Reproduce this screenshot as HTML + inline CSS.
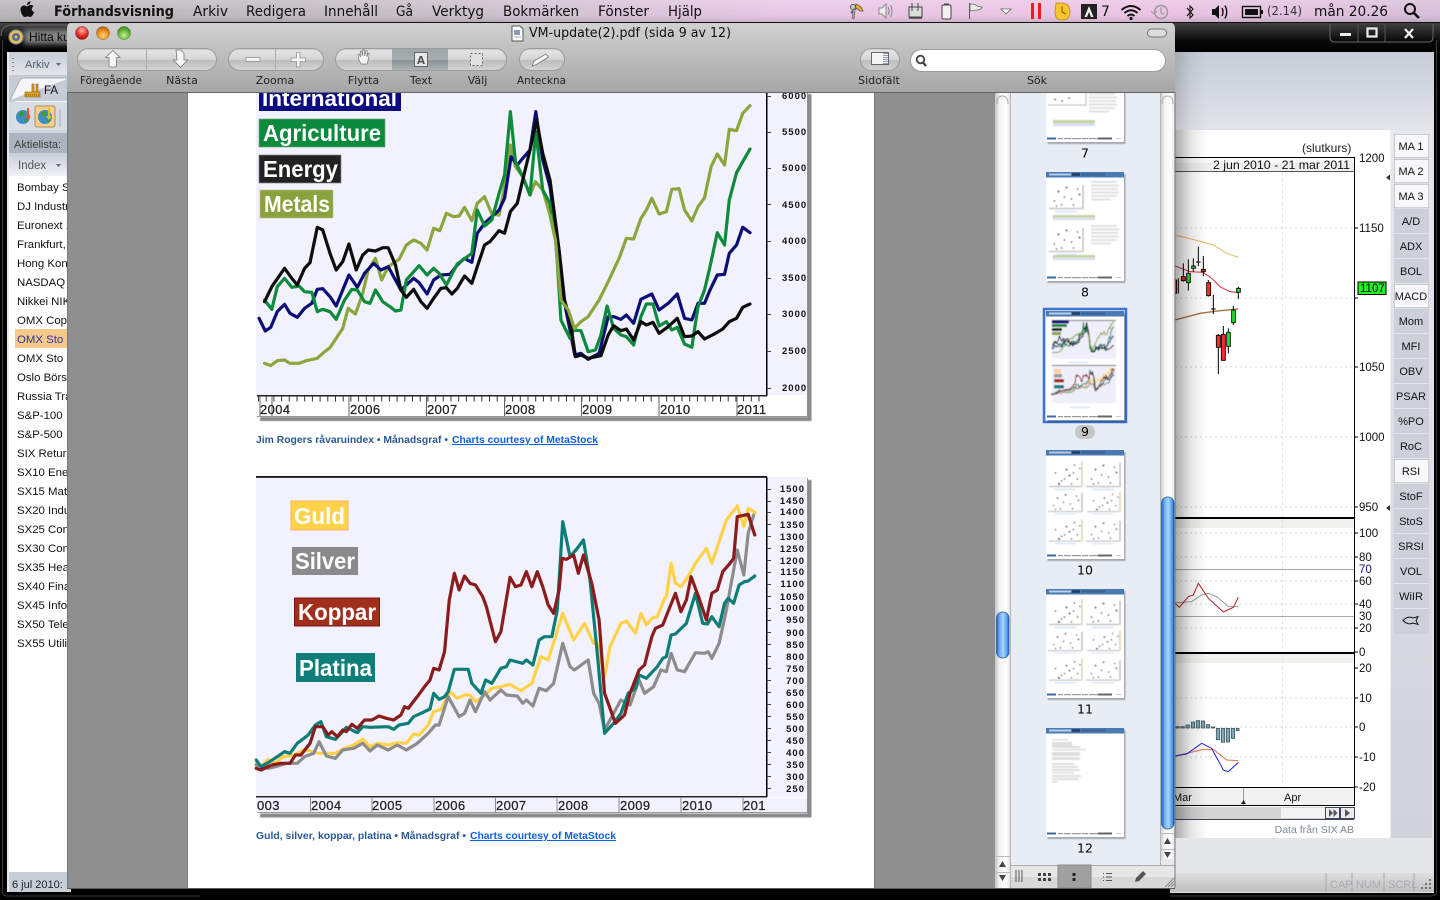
<!DOCTYPE html>
<html><head><meta charset="utf-8"><title>VM-update(2).pdf</title>
<style>
html,body{margin:0;padding:0;width:1440px;height:900px;overflow:hidden;background:#000}
svg{display:block;position:absolute;left:0;top:0}
text{font-family:"DejaVu Sans",sans-serif}
.ln{fill:none;vector-effect:non-scaling-stroke;stroke-linejoin:round;stroke-linecap:round}
.ax text{font-family:"Liberation Sans",sans-serif;font-weight:bold;font-size:9.5px;letter-spacing:1px;fill:#111}
.yr text{font-family:"Liberation Sans",sans-serif;font-size:13px;fill:#222;letter-spacing:.4px;stroke:#222;stroke-width:.25}
.m text{font-size:14px;fill:#111}
.tb text{font-size:11px;fill:#222;text-anchor:middle}
.li text{font-family:"Liberation Sans",sans-serif;font-size:11.4px;fill:#111}
.bt text{font-family:"Liberation Sans",sans-serif;font-size:11px;fill:#111;text-anchor:middle}
.sc text{font-family:"Liberation Sans",sans-serif;font-size:11.5px;fill:#111}
</style></head><body>
<svg width="1440" height="900" viewBox="0 0 1440 900" xmlns="http://www.w3.org/2000/svg">
<defs>
<linearGradient id="menu" x1="0" x2="1" y1="0" y2="0"><stop offset="0" stop-color="#b9b7b9"/><stop offset=".3" stop-color="#c8c0c8"/><stop offset=".55" stop-color="#e8c8e6"/><stop offset=".8" stop-color="#ecc4e4"/><stop offset="1" stop-color="#d7c0da"/></linearGradient>
<linearGradient id="menuv" x1="0" x2="0" y1="0" y2="1"><stop offset="0" stop-color="#fff" stop-opacity=".18"/><stop offset=".5" stop-color="#fff" stop-opacity="0"/><stop offset="1" stop-color="#000" stop-opacity=".12"/></linearGradient>
<linearGradient id="tbar" x1="0" x2="0" y1="0" y2="1"><stop offset="0" stop-color="#d2d2d2"/><stop offset="1" stop-color="#a6a6a6"/></linearGradient>
<linearGradient id="pill" x1="0" x2="0" y1="0" y2="1"><stop offset="0" stop-color="#bdbdbd"/><stop offset=".1" stop-color="#e4e4e4"/><stop offset=".5" stop-color="#d4d4d4"/><stop offset=".55" stop-color="#bdbdbd"/><stop offset="1" stop-color="#d5d5d5"/></linearGradient>
<linearGradient id="pillsel" x1="0" x2="0" y1="0" y2="1"><stop offset="0" stop-color="#9fa4a6"/><stop offset=".5" stop-color="#a9aeb0"/><stop offset=".55" stop-color="#889195"/><stop offset="1" stop-color="#aeb3b5"/></linearGradient>
<linearGradient id="vtrack" x1="0" x2="1" y1="0" y2="0"><stop offset="0" stop-color="#c6c6c6"/><stop offset=".3" stop-color="#f2f2f2"/><stop offset=".75" stop-color="#fff"/><stop offset="1" stop-color="#dcdcdc"/></linearGradient>
<linearGradient id="vthumb" x1="0" x2="1" y1="0" y2="0"><stop offset="0" stop-color="#1f5fc0"/><stop offset=".25" stop-color="#6fb0ee"/><stop offset=".55" stop-color="#a9d6fb"/><stop offset=".85" stop-color="#4b9cec"/><stop offset="1" stop-color="#1f5fc0"/></linearGradient>
<linearGradient id="shade" x1="0" x2="1" y1="0" y2="0"><stop offset="0" stop-color="#000" stop-opacity=".34"/><stop offset=".5" stop-color="#000" stop-opacity=".1"/><stop offset="1" stop-color="#000" stop-opacity="0"/></linearGradient>
<linearGradient id="panel" x1="0" x2="0" y1="0" y2="1"><stop offset="0" stop-color="#c7ccd6"/><stop offset="1" stop-color="#e3e5ea"/></linearGradient>
<linearGradient id="right" x1="0" x2="0" y1="0" y2="1"><stop offset="0" stop-color="#e6e8ec"/><stop offset="1" stop-color="#d0d3da"/></linearGradient>
<linearGradient id="idx" x1="0" x2="0" y1="0" y2="1"><stop offset="0" stop-color="#c9cdd7"/><stop offset="1" stop-color="#f0f1f4"/></linearGradient>
<linearGradient id="blk" x1="0" x2="0" y1="0" y2="1"><stop offset="0" stop-color="#444"/><stop offset=".6" stop-color="#0c0c0c"/><stop offset="1" stop-color="#000"/></linearGradient>
<linearGradient id="lgray" x1="0" x2="0" y1="0" y2="1"><stop offset="0" stop-color="#dfdfdf"/><stop offset="1" stop-color="#bfbfbf"/></linearGradient>
<radialGradient id="rd" cx=".5" cy=".3" r=".7"><stop offset="0" stop-color="#ffb0a8"/><stop offset=".6" stop-color="#e83028"/><stop offset="1" stop-color="#a01010"/></radialGradient>
<radialGradient id="yl" cx=".5" cy=".7" r=".7"><stop offset="0" stop-color="#ffd870"/><stop offset=".6" stop-color="#e88a20"/><stop offset="1" stop-color="#b06010"/></radialGradient>
<radialGradient id="gn" cx=".5" cy=".7" r=".7"><stop offset="0" stop-color="#c0f090"/><stop offset=".6" stop-color="#64b83c"/><stop offset="1" stop-color="#3c8020"/></radialGradient>
<filter id="soft" x="-5%" y="-5%" width="110%" height="110%"><feGaussianBlur stdDeviation=".35"/></filter>
<filter id="soft2" x="-5%" y="-5%" width="110%" height="110%"><feGaussianBlur stdDeviation=".5"/></filter>
<filter id="soft3" x="-20%" y="-50%" width="140%" height="200%"><feGaussianBlur stdDeviation="3"/></filter>
<clipPath id="cc"><rect x="67" y="92" width="1108" height="796"/></clipPath>

<g id="c1m">
<polyline class="ln" stroke="#8aa63c" points="40,820 57,827 75,812 95,810 110,820 135,820 155,812 185,805 205,785 220,773 240,740 255,715 270,655 290,672 310,610 325,540 345,505 362,570 380,530 410,508 430,465 450,450 470,460 487,480 505,415 522,422 540,370 560,380 575,378 590,352 610,392 625,340 645,320 665,372 685,375 700,290 716,165 730,230 750,260 770,315 785,275 805,300 825,375 840,450 855,630 875,660 892,715 910,695 930,680 960,630 985,575 1015,505 1035,445 1055,447 1075,385 1090,360 1105,325 1125,372 1145,365 1160,298 1180,296 1195,360 1215,393 1232,350 1250,323 1268,230 1285,192 1305,225 1318,118 1338,122 1355,70 1375,47"/>
<polyline class="ln" stroke="#101078" points="25,685 42,723 57,712 75,665 95,643 110,670 130,682 150,655 170,640 185,598 200,596 220,620 237,648 255,600 272,555 295,592 315,550 340,520 360,540 380,530 400,570 415,600 430,585 450,565 465,578 487,612 505,570 525,555 550,553 570,525 590,505 610,517 625,430 645,400 665,380 685,360 700,325 718,200 735,225 750,205 770,180 786,65 805,210 825,290 850,500 865,640 880,720 893,795 910,790 930,808 960,790 985,680 1000,680 1020,688 1035,675 1055,700 1075,628 1105,612 1125,660 1150,640 1175,612 1195,685 1215,690 1232,640 1250,640 1265,600 1285,555 1305,553 1318,490 1338,465 1355,412 1375,428"/>
<polyline class="ln" stroke="#0c8a3a" points="40,630 60,658 75,590 95,565 115,592 135,588 150,605 170,607 185,665 200,658 220,665 237,688 260,630 280,598 295,600 315,635 330,640 345,600 365,635 385,650 400,663 415,660 430,570 465,527 487,555 505,535 520,550 540,585 570,522 610,490 625,360 645,408 665,390 685,310 700,255 716,65 730,215 750,260 770,315 786,125 805,300 825,340 840,430 855,690 880,745 890,720 910,722 930,785 950,780 965,735 982,648 1000,715 1020,735 1035,740 1055,765 1075,680 1090,642 1108,642 1125,708 1145,695 1160,720 1175,712 1195,762 1215,772 1232,650 1250,600 1265,530 1285,428 1305,465 1318,330 1338,248 1355,215 1375,177"/>
<polyline class="ln" stroke="#0a0a0a" points="40,635 60,590 95,535 115,565 130,585 150,535 165,518 185,412 200,420 220,490 237,540 255,515 272,462 292,540 310,495 325,480 345,483 365,473 380,473 400,525 415,600 430,622 450,598 470,635 487,655 505,625 525,595 540,593 555,612 570,595 590,558 610,580 625,530 645,465 660,455 685,422 700,430 716,365 735,340 750,270 770,180 788,90 805,190 825,270 850,480 865,630 880,690 895,800 910,795 930,805 965,797 985,735 1000,707 1020,722 1035,717 1055,750 1075,695 1090,705 1108,697 1125,730 1150,710 1175,685 1195,740 1215,738 1232,725 1250,747 1275,733 1300,717 1318,695 1338,685 1355,652 1375,642"/>
<polyline class="ln" stroke="#8aa63c" points="825,375 840,450 855,630 875,660 892,715"/>
</g>
<g id="c2m">
<polyline class="ln" stroke="#ffd24a" points="17,880 30,890 50,868 70,880 90,860 110,858 130,850 150,838 170,845 190,850 210,850 235,850 260,835 285,825 310,808 330,830 350,820 380,825 405,818 430,820 450,792 465,795 490,765 505,725 525,718 550,665 570,685 590,675 605,675 620,695 640,680 665,655 690,650 715,643 745,662 775,640 800,560 820,570 860,430 890,510 920,460 945,520 955,520 975,620 990,530 1020,460 1035,453 1060,490 1075,430 1090,465 1105,445 1120,440 1140,385 1145,380 1158,280 1170,340 1185,350 1205,320 1225,280 1255,235 1270,280 1310,150 1340,108 1358,170 1370,115 1390,128"/>
<polyline class="ln" stroke="#8c8c8c" points="17,885 50,895 70,890 100,880 130,880 150,860 175,850 190,815 210,858 235,865 255,840 285,835 310,820 330,843 350,825 380,840 405,825 430,840 460,820 490,790 510,765 520,765 545,680 575,740 590,730 605,690 620,725 645,665 660,690 690,660 705,675 735,678 750,700 760,690 778,708 795,655 815,662 835,640 860,520 880,590 892,600 930,570 945,670 960,700 975,780 1020,690 1045,705 1070,630 1085,670 1110,650 1130,600 1145,605 1158,550 1175,600 1195,605 1225,548 1250,550 1260,545 1270,565 1290,520 1310,420 1340,240 1358,315 1370,190 1385,135"/>
<polyline class="ln" stroke="#0f7d78" points="17,870 30,890 50,878 75,860 95,845 110,850 130,820 160,795 180,765 195,755 210,800 235,808 255,785 265,772 295,788 310,770 330,772 380,770 395,778 410,765 435,760 450,740 470,730 495,717 505,670 520,688 535,680 545,665 562,598 600,598 610,640 635,670 648,630 665,640 690,595 705,590 715,570 750,580 760,570 778,585 795,510 810,500 830,500 845,420 860,155 880,260 900,235 917,210 935,330 955,550 975,790 1000,760 1020,730 1040,670 1060,655 1070,615 1090,625 1120,590 1135,565 1145,560 1158,495 1170,492 1200,460 1225,370 1245,460 1258,462 1270,440 1290,470 1305,400 1315,385 1330,400 1345,345 1360,335 1370,333 1388,318"/>
<polyline class="ln" stroke="#8b1a1e" points="17,895 30,900 60,885 85,880 110,880 125,855 140,855 165,820 180,770 200,770 215,795 225,785 240,800 255,780 265,785 280,763 295,775 315,750 335,750 355,738 375,745 395,750 415,735 425,710 435,715 460,680 480,650 495,630 505,595 520,600 535,545 548,390 562,310 575,360 590,318 605,340 620,345 640,380 650,410 675,515 690,485 715,322 730,350 745,345 760,305 775,350 790,305 805,350 820,405 835,430 850,360 858,265 870,268 890,255 903,310 917,255 940,340 960,450 975,670 1005,760 1030,735 1045,670 1070,600 1085,585 1105,500 1115,475 1135,465 1155,410 1170,370 1185,425 1200,390 1213,320 1235,385 1255,450 1270,370 1285,360 1300,305 1320,280 1330,265 1340,140 1370,133 1388,195"/>
</g>

<g id="thb">
<rect x="1.500" y="2" width="78" height="109" fill="#000" opacity=".28" filter="url(#soft2)"/>
<rect width="78" height="109" fill="#fff"/>
<rect width="78" height="5.500" fill="#4a7ab4"/>
<rect x="3" y="1.500" width="22" height="2" fill="#d5e2f0" opacity=".8"/>
<rect x="26" y="1.200" width="8" height="2.600" fill="#1a2f55" opacity=".8"/>
<rect x="35" y="1.500" width="24" height="2" fill="#3a5a88" opacity=".8"/>
<rect x="1" y="104.500" width="9" height="2" fill="#3a6aa5"/>
<g fill="#999"><rect x="12" y="105" width="5" height="1.200"/><rect x="18" y="105" width="7" height="1.200"/><rect x="26" y="105" width="9" height="1.200"/><rect x="36" y="105" width="6" height="1.200"/><rect x="43" y="105" width="9" height="1.200"/></g>
<rect x="52" y="104.500" width="14" height="2" fill="#666"/>
<rect x="70" y="105" width="5" height="1" fill="#ccc"/>
</g>
<g id="tl" fill="#e1e1e1"><rect width="26" height="2"/><rect y="3.500" width="28" height="2"/><rect y="7" width="27" height="2"/><rect y="10.500" width="28" height="2"/><rect y="14" width="26" height="2"/><rect y="17.500" width="20" height="2"/></g>
<g id="mini">
<path d="M2 29.500h32" stroke="#bcbcbc" stroke-width="1.200" fill="none"/><path d="M35 4v26" stroke="#d8c898" stroke-width="1.200" fill="none"/>
<path d="M7 32.500h22" stroke="#d4e3f9" stroke-width="1.400" fill="none"/>
<path d="M8 16l1 0M14 24l1 0M19 12l1 1M22 18l1 1M27 8l1 0M30 22l1 0M33 11l0 1M11 27l2 0M24 27l1 0M17 22l1 0M26 16l1 0" stroke="#1a1a1a" stroke-width="1.300" fill="none"/>
</g>
<g id="mini2">
<path d="M1 29.500h33" stroke="#bcbcbc" stroke-width="1.200" fill="none"/><path d="M35 6v24" stroke="#b0b0b0" stroke-width="1.200" fill="none"/>
<path d="M7 32.500h22" stroke="#d4e3f9" stroke-width="1.400" fill="none"/>
<path d="M6 22l1 0M10 12l1 1M13 26l1 0M18 8l1 1M23 20l1 0M25 26l1 0M29 10l1 0M31 15l1 1M8 27l1 0M16 18l1 0" stroke="#1a1a1a" stroke-width="1.300" fill="none"/>
</g>
</defs>

<!-- backdrop -->
<rect width="1440" height="900" fill="#000"/>

<!-- left app -->
<g>
<rect x="0" y="22" width="70" height="30" fill="url(#blk)"/>
<rect x="24" y="30" width="50" height="14" fill="#aaa" opacity=".75" filter="url(#soft3)"/>
<path d="M1 36 Q1 26 10 25 H70" stroke="#666" fill="none"/>
<path d="M2.500 40V892Q2.500 896 7 896H200" stroke="#3a3a3a" fill="none"/>
<rect x="7" y="52" width="62" height="840" fill="#d2d6de"/>
<rect x="7.500" y="52" width="62" height="23" fill="url(#panel)"/>
<circle cx="16" cy="37" r="7" fill="#e2c74a" stroke="#889" stroke-width="1.200"/><circle cx="16" cy="37" r="4" fill="#5a62a8"/><circle cx="16" cy="37" r="1.500" fill="#e2c74a"/>
<text x="29" y="41" font-size="12" fill="#050505" style="font-family:'Liberation Sans',sans-serif">Hitta ku</text>
<path d="M13 58v1M13 62v1M13 66v1M13 70v1" stroke="#8a8a8a" stroke-width="2"/>
<text x="25" y="68" font-size="11" fill="#555c6c" style="font-family:'Liberation Sans',sans-serif">Arkiv</text>
<path d="M56 63l5 0-2.500 3z" fill="#667"/>
<rect x="7" y="75" width="62" height="27" fill="#c6cbd6"/>
<path d="M10 100 L20 80 Q21 78 24 78 H70" fill="#f4f5f8" stroke="#a8adb8"/>
<rect x="15" y="101" width="55" height="1" fill="#f4f5f8"/>
<path d="M25 97h15v-5h-2v-8h-2v8h-2v-8h-2v8h-7z" fill="#e0a020" stroke="#7a5a10" stroke-width=".6"/>
<path d="M26 95h13" stroke="#7a5a10" stroke-dasharray="1 1"/>
<text x="44" y="94" font-size="11.500" fill="#111" style="font-family:'Liberation Sans',sans-serif">FA</text>
<rect x="7" y="102" width="62" height="28" fill="#d8dce4"/>
<circle cx="23" cy="117" r="7" fill="#3e8cc8"/><path d="M19 113l4-2 2 3-3 3-3-1zM24 120l3-2 1 2-2 3z" fill="#3d9b3d"/><path d="M27 108v8h-2l3 4 3-4h-2v-8z" fill="#e85a20"/>
<rect x="35" y="106" width="20" height="21" rx="2" fill="#f6cf8c" stroke="#b58c4c"/>
<circle cx="45" cy="117" r="7" fill="#3e8cc8"/><path d="M41 113l4-2 2 3-3 3-3-1zM46 120l3-2 1 2-2 3z" fill="#3d9b3d"/><path d="M48 108v8h-2l3 4 3-4h-2v-8z" fill="#e0c020"/>
<path d="M60 109v18" stroke="#a8adb8"/>
<rect x="9" y="133" width="60" height="20" fill="#aeb3bf"/>
<text x="14" y="148" font-size="11" fill="#3c3c3c" style="font-family:'Liberation Sans',sans-serif">Aktielista:</text>
<rect x="9" y="153" width="60" height="23" fill="url(#idx)"/>
<text x="18" y="169" font-size="11.500" fill="#555" style="font-family:'Liberation Sans',sans-serif">Index</text>
<path d="M56 164l5 0-2.500 3z" fill="#667"/>
<rect x="9" y="176" width="60" height="696" fill="#fff"/>
<rect x="15" y="329" width="54" height="19" fill="#f5c98a"/>
<g class="li">
<text x="17" y="191">Bombay S</text><text x="17" y="210">DJ Industr</text><text x="17" y="229">Euronext 1</text><text x="17" y="248">Frankfurt,</text><text x="17" y="267">Hong Kon</text><text x="17" y="286">NASDAQ</text><text x="17" y="305">Nikkei NIK</text><text x="17" y="324">OMX Cop</text><text x="17" y="343" style="fill:#3030a8">OMX Sto</text><text x="17" y="362">OMX Sto</text><text x="17" y="381">Oslo Börs</text><text x="17" y="400">Russia Tra</text><text x="17" y="419">S&amp;P-100</text><text x="17" y="438">S&amp;P-500</text><text x="17" y="457">SIX Return</text><text x="17" y="476">SX10 Ener</text><text x="17" y="495">SX15 Mat</text><text x="17" y="514">SX20 Indu</text><text x="17" y="533">SX25 Con</text><text x="17" y="552">SX30 Con</text><text x="17" y="571">SX35 Hea</text><text x="17" y="590">SX40 Fina</text><text x="17" y="609">SX45 Info</text><text x="17" y="628">SX50 Tele</text><text x="17" y="647">SX55 Utili</text>
</g>
<rect x="9" y="872" width="62" height="20" fill="#c9cdd6"/>
<text x="12" y="888" font-size="11" fill="#223" style="font-family:'Liberation Sans',sans-serif">6 jul 2010:</text>
<rect x="7" y="52" width="2" height="840" fill="#e8eaee"/>
</g>

<!-- right app -->
<g>
<rect x="1170" y="22" width="270" height="30" fill="url(#blk)"/>
<path d="M1330 24V37Q1330 42 1335 42H1428Q1433 42 1433 37V24" fill="none" stroke="#666"/>
<path d="M1358 24V42M1385 24V42" stroke="#555"/>
<rect x="1340" y="33" width="11" height="3" fill="#eee"/>
<rect x="1367.500" y="28.500" width="9" height="8" fill="none" stroke="#eee" stroke-width="2.200"/>
<path d="M1405 29l8 9M1413 29l-8 9" stroke="#eee" stroke-width="2.200"/>
<rect x="1170" y="52" width="264" height="841" fill="#dfe1e6"/>
<rect x="1170" y="52" width="264" height="80" fill="url(#panel)"/>
<rect x="1170" y="130" width="220" height="708" fill="#fff"/>
<path d="M1390.500 130V838.500H1170" fill="none" stroke="#eef0f3"/>
<rect x="1391" y="130" width="41" height="708" fill="url(#right)"/>
<rect x="1170" y="838" width="262" height="35" fill="#e4e6ea"/>
<rect x="1170" y="873" width="264" height="19" fill="url(#lgray)"/>
<path d="M1326 873v19M1352 873v19M1384 873v19M1414 873v19" stroke="#aaa"/>
<g fill="#a9abb0" font-size="11"><text x="1330" y="888" style="font-family:'Liberation Sans',sans-serif">CAP</text><text x="1356" y="888" style="font-family:'Liberation Sans',sans-serif">NUM</text><text x="1388" y="888" style="font-family:'Liberation Sans',sans-serif">SCRL</text></g>
<path d="M1421 888h2M1425 888h2M1429 888h2M1425 884h2M1429 884h2M1429 880h2" stroke="#555" stroke-width="1.500"/>
<rect x="1434" y="52" width="6" height="848" fill="#000"/>
<path d="M1436.500 40V892Q1436.500 896 1430 896H1170" stroke="#3a3a3a" fill="none"/>
<!-- buttons -->
<g>
<rect x="1394" y="134" width="35" height="500" fill="#cdd0d8"/>
<g stroke="#e2e4e8"><path d="M1394 158.500h35M1394 183.500h35M1394 208.500h35M1394 233.500h35M1394 258.500h35M1394 283.500h35M1394 308.500h35M1394 333.500h35M1394 358.500h35M1394 383.500h35M1394 408.500h35M1394 433.500h35M1394 458.500h35M1394 483.500h35M1394 508.500h35M1394 533.500h35M1394 558.500h35M1394 583.500h35M1394 608.500h35"/></g>
<g fill="#f8f8fa" stroke="#a8abb2" stroke-width=".6"><rect x="1394.300" y="134.300" width="34.500" height="23.500"/><rect x="1394.300" y="159.300" width="34.500" height="23.500"/><rect x="1394.300" y="184.300" width="34.500" height="23.500"/><rect x="1394.300" y="284.300" width="34.500" height="23.500"/><rect x="1394.300" y="459.300" width="34.500" height="23.500"/></g>
<g class="bt"><text x="1411" y="150">MA 1</text><text x="1411" y="175">MA 2</text><text x="1411" y="200">MA 3</text><text x="1411" y="225">A/D</text><text x="1411" y="250">ADX</text><text x="1411" y="275">BOL</text><text x="1411" y="300">MACD</text><text x="1411" y="325">Mom</text><text x="1411" y="350">MFI</text><text x="1411" y="375">OBV</text><text x="1411" y="400">PSAR</text><text x="1411" y="425">%PO</text><text x="1411" y="450">RoC</text><text x="1411" y="475">RSI</text><text x="1411" y="500">StoF</text><text x="1411" y="525">StoS</text><text x="1411" y="550">SRSI</text><text x="1411" y="575">VOL</text><text x="1411" y="600">WiIR</text></g>
<path d="M1403 620.500Q1408 615.500 1413 618L1418 616.500 1416 620.500 1418 624.500 1413 623Q1408 625.500 1403 620.500Z" fill="none" stroke="#111"/>
</g>
<!-- chart -->
<text x="1302" y="152" font-size="12" fill="#222" style="font-family:'Liberation Sans',sans-serif">(slutkurs)</text>
<rect x="1170" y="157" width="184" height="15" fill="#eeeeee"/>
<rect x="1170" y="157" width="184" height="6" fill="#f8f8f8"/>
<text x="1350" y="169" font-size="12" fill="#111" text-anchor="end" textLength="137" lengthAdjust="spacingAndGlyphs" style="font-family:'Liberation Sans',sans-serif">2 jun 2010 - 21 mar 2011</text>
<rect x="1170" y="519" width="184" height="9" fill="#f1f2f0"/>
<rect x="1170" y="654" width="184" height="9" fill="#f1f2f0"/>
<g stroke="#d8d8d8" stroke-dasharray="2 3" fill="none"><path d="M1170 228h184M1170 298h184M1170 367h184M1170 437h184M1170 507h184M1170 533h184M1170 557h184M1170 581h184M1170 604h184M1170 628h184M1170 698h184M1170 727h184M1170 757h184"/><path d="M1282.500 172V518M1282.500 519V653M1282.500 654V787" stroke-dasharray="3 3" stroke="#e2e2e2"/></g>
<path d="M1170 569.500h184M1170 616.500h184" stroke="#a8a8a8"/>
<path d="M1170 157.500H1354.500V805.500H1170" fill="none" stroke="#000"/>
<path d="M1170 171.500h184" stroke="#555"/>
<rect x="1170" y="517" width="185" height="2" fill="#000"/>
<rect x="1170" y="652" width="185" height="2" fill="#000"/>
<path d="M1170 787.500h184" stroke="#000"/>
<rect x="1170" y="788" width="184" height="17" fill="#f2f2f2"/>
<path d="M1243.500 788v17" stroke="#999"/>
<path d="M1241 804l2.500-4 2.500 4z" fill="#222"/>
<path d="M1170 805.500h184" stroke="#000"/>
<text x="1173" y="801" font-size="11" fill="#111" style="font-family:'Liberation Sans',sans-serif">Mar</text>
<text x="1284" y="801" font-size="11" fill="#111" style="font-family:'Liberation Sans',sans-serif">Apr</text>
<rect x="1170" y="807" width="184" height="12" fill="#d4d4d4"/>
<rect x="1281" y="808" width="45" height="10" fill="#f4f4f4"/>
<rect x="1325.500" y="807.500" width="14" height="11" fill="#ececf0" stroke="#3c4658"/>
<rect x="1340.500" y="807.500" width="14" height="11" fill="#ececf0" stroke="#3c4658"/>
<path d="M1329 809l4 4-4 4zM1333.500 809l4 4-4 4zM1345 809l5 4-5 4z" fill="#555"/>
<path d="M1170 819.500h184" stroke="#3c4658"/>
<text x="1354" y="833" font-size="10.500" fill="#7f8890" text-anchor="end" style="font-family:'Liberation Sans',sans-serif">Data från SIX AB</text>
<g class="sc">
<text x="1359" y="162">1200</text><text x="1359" y="232">1150</text><text x="1359" y="371">1050</text><text x="1359" y="441">1000</text><text x="1359" y="511">950</text>
<text x="1359" y="537">100</text><text x="1359" y="561">80</text><text x="1359" y="573" style="fill:#101080">70</text><text x="1359" y="585">60</text><text x="1359" y="608">40</text><text x="1359" y="620">30</text><text x="1359" y="632">20</text><text x="1359" y="656">0</text>
<text x="1359" y="672">20</text><text x="1359" y="702">10</text><text x="1359" y="731">0</text><text x="1359" y="761">-10</text><text x="1359" y="791">-20</text>
</g>
<path d="M1355 228h3M1355 298h3M1355 367h3M1355 437h3M1355 507h3M1355 533h3M1355 557h3M1355 581h3M1355 604h3M1355 628h3M1355 652h3M1355 668h3M1355 698h3M1355 727h3M1355 757h3M1355 787h3" stroke="#000"/>
<rect x="1358" y="282" width="28" height="12.500" fill="#23f023" stroke="#000"/>
<text x="1360" y="292" font-size="11.500" fill="#000" style="font-family:'Liberation Sans',sans-serif">1107</text>
<path d="M1386 177.500l4-3v6zM1386 508l4-3v6z" fill="#333"/>
<!-- candles -->
<g transform="translate(1170,130) scale(.33333)">
<polyline points="15,315 95,335 130,345 170,370 205,382" fill="none" stroke="#efb765" stroke-width="3"/>
<polyline points="15,408 60,425 100,427 125,445 150,470 180,485 205,488" fill="none" stroke="#d43040" stroke-width="3"/>
<polyline points="15,570 90,550 150,542 205,537" fill="none" stroke="#a87040" stroke-width="4"/>
<g stroke="#000" stroke-width="3" fill="none"><path d="M25 445V490M40 400V455M55 388V482M70 385V425M85 350V408M78 396H92M100 378V438M115 450V500M130 495V552M123 537H137M145 612V732M160 588V692M175 595V670M190 528V585M205 470V507"/></g>
<g stroke="#000" stroke-width="2.600">
<rect x="14" y="450" width="6" height="40" fill="#ff2a2a"/>
<rect x="34" y="440" width="12" height="12" fill="#ff2a2a"/><rect x="50" y="430" width="11" height="28" fill="#22e022"/><rect x="65" y="408" width="11" height="7" fill="#22e022"/>
<rect x="94" y="418" width="12" height="7" fill="#ff2a2a"/><rect x="110" y="458" width="12" height="39" fill="#ff2a2a"/>
<rect x="139" y="616" width="12" height="36" fill="#ff2a2a"/><rect x="154" y="613" width="12" height="78" fill="#ff2a2a"/><rect x="170" y="607" width="11" height="42" fill="#22e022"/>
<rect x="185" y="540" width="11" height="38" fill="#22e022"/><rect x="200" y="475" width="11" height="12" fill="#22e022"/></g>
</g>
<g transform="translate(1170,510) scale(.33333)">
<polyline points="15,278 65,275 95,255 115,250 140,260 175,290 205,290" fill="none" stroke="#9a9a9a" stroke-width="3"/>
<polyline points="15,280 28,292 55,260 70,255 85,220 115,265 160,306 190,292 205,262" fill="none" stroke="#b02028" stroke-width="3"/>
<g fill="#7fa6b2" stroke="#3c5660" stroke-width="2.400"><rect x="18" y="650" width="10" height="4"/><rect x="33" y="650" width="10" height="4"/><rect x="48" y="645" width="10" height="9"/><rect x="64" y="636" width="10" height="18"/><rect x="79" y="632" width="10" height="22"/><rect x="94" y="633" width="10" height="21"/><rect x="109" y="644" width="10" height="10"/><rect x="124" y="651" width="10" height="3"/><rect x="139" y="655" width="10" height="34"/><rect x="154" y="655" width="10" height="42"/><rect x="169" y="655" width="10" height="41"/><rect x="184" y="655" width="10" height="30"/><rect x="199" y="655" width="8" height="7"/></g>
<polyline points="15,738 50,730 100,718 130,718 170,750 205,752" fill="none" stroke="#e07050" stroke-width="3"/>
<polyline points="15,738 50,732 95,700 125,715 160,780 175,785 205,757" fill="none" stroke="#2020e0" stroke-width="3"/>
</g>
<rect x="1175" y="130" width="32" height="708" fill="url(#shade)"/>
<rect x="1175" y="52" width="32" height="78" fill="url(#shade)" opacity=".5"/>
</g>

<!-- PREVIEW WINDOW -->
<rect x="67" y="92" width="928" height="796" fill="#8f8f8f"/>
<rect x="188" y="92" width="686" height="796" fill="#fff"/>
<path d="M187.500 92V888M874.500 92V888" stroke="#7a7a7a"/>
<g clip-path="url(#cc)">
<!-- chart 1 -->
<rect x="256" y="92" width="550" height="303" fill="#f2f2fe"/>
<g transform="translate(250,90) scale(.36364,.33333)" stroke-width="3.200" filter="url(#soft)"><use href="#c1m"/></g>
<rect x="766" y="92" width="1.500" height="304" fill="#000"/>
<path d="M767 96.500h4M767 132.500h4M767 168.500h4M767 204.500h4M767 241.500h4M767 278.500h4M767 314.500h4M767 351.500h4M767 388.500h4" stroke="#444"/>
<g class="ax"><text x="782" y="99">6000</text><text x="782" y="135">5500</text><text x="782" y="171">5000</text><text x="782" y="208">4500</text><text x="782" y="244">4000</text><text x="782" y="281">3500</text><text x="782" y="317">3000</text><text x="782" y="354">2500</text><text x="782" y="391">2000</text></g>
<rect x="257" y="395" width="510" height="1.500" fill="#222"/>
<rect x="256" y="397" width="552" height="19" fill="#fff"/>
<path d="M258 399H766" stroke="#333" stroke-width="5" stroke-dasharray="1 6.700"/>
<path d="M260 396v20M272 396v20M349 396v20M426.500 396v20M504.500 396v20M581.500 396v20M659 396v20M737 396v20" stroke="#666"/>
<g class="yr"><text x="260" y="414">2004</text><text x="350" y="414">2006</text><text x="427" y="414">2007</text><text x="505" y="414">2008</text><text x="582" y="414">2009</text><text x="660" y="414">2010</text><text x="737" y="414">2011</text></g>
<path d="M257 416.500H807.500V93" fill="none" stroke="#9a9a9a"/>
<path d="M260 419H809.500V94" fill="none" stroke="#888" stroke-width="4" filter="url(#soft2)"/>
<rect x="259" y="84" width="142" height="27" fill="#0c0c80"/><text x="262" y="106" font-size="22" textLength="135" lengthAdjust="spacingAndGlyphs" style="font-family:'Liberation Sans',sans-serif" font-weight="bold" fill="#fff">International</text>
<rect x="259" y="119" width="126" height="28" fill="#0a8a3c" stroke="#7aa080" stroke-width=".7"/><text x="263" y="141" font-size="23" textLength="118" lengthAdjust="spacingAndGlyphs" style="font-family:'Liberation Sans',sans-serif" font-weight="bold" fill="#fff">Agriculture</text>
<rect x="259" y="155" width="82" height="28" fill="#222" stroke="#888" stroke-width=".7"/><text x="263" y="177" font-size="23" textLength="75" lengthAdjust="spacingAndGlyphs" style="font-family:'Liberation Sans',sans-serif" font-weight="bold" fill="#fff">Energy</text>
<rect x="260" y="190" width="73" height="28" fill="#8aa23e" stroke="#b8c080" stroke-width=".7"/><text x="264" y="212" font-size="23" textLength="66" lengthAdjust="spacingAndGlyphs" style="font-family:'Liberation Sans',sans-serif" font-weight="bold" fill="#fff">Metals</text>
<text x="256" y="443" font-size="10.500" fill="#2a5a96" textLength="192" lengthAdjust="spacingAndGlyphs" style="font-family:'Liberation Sans',sans-serif" font-weight="bold">Jim Rogers råvaruindex • Månadsgraf •</text>
<text x="452" y="443" font-size="10.500" fill="#0f5fe8" text-decoration="underline" textLength="146" lengthAdjust="spacingAndGlyphs" style="font-family:'Liberation Sans',sans-serif" font-weight="bold">Charts courtesy of MetaStock</text>
<!-- chart 2 -->
<rect x="256" y="477" width="550" height="320" fill="#f2f2fe"/>
<rect x="256" y="476" width="511" height="1.800" fill="#111"/>
<g transform="translate(250,470) scale(.36364,.33333)" stroke-width="3.200" filter="url(#soft)"><use href="#c2m"/></g>
<rect x="766" y="477" width="1.500" height="320" fill="#000"/>
<path d="M767 489.500h4M767 501.500h4M767 512.500h4M767 524.500h4M767 536.500h4M767 548.500h4M767 560.500h4M767 572.500h4M767 584.500h4M767 596.500h4M767 608.500h4M767 620.500h4M767 632.500h4M767 644.500h4M767 656.500h4M767 668.500h4M767 680.500h4M767 692.500h4M767 704.500h4M767 716.500h4M767 728.500h4M767 740.500h4M767 752.500h4M767 764.500h4M767 776.500h4M767 788.500h4" stroke="#444"/>
<g class="ax" text-anchor="end"><text x="805" y="492">1500</text><text x="805" y="504">1450</text><text x="805" y="515">1400</text><text x="805" y="528">1350</text><text x="805" y="540">1300</text><text x="805" y="552">1250</text><text x="805" y="564">1200</text><text x="805" y="587">1100</text><text x="805" y="575">1150</text><text x="805" y="600">1050</text><text x="805" y="611">1000</text><text x="805" y="623">950</text><text x="805" y="636">900</text><text x="805" y="648">850</text><text x="805" y="660">800</text><text x="805" y="672">750</text><text x="805" y="684">700</text><text x="805" y="696">650</text><text x="805" y="708">600</text><text x="805" y="720">550</text><text x="805" y="732">500</text><text x="805" y="744">450</text><text x="805" y="756">400</text><text x="805" y="768">350</text><text x="805" y="780">300</text><text x="805" y="792">250</text></g>
<rect x="256" y="796" width="511" height="1.500" fill="#222"/>
<rect x="256" y="798" width="552" height="14" fill="#f2f2fe"/>
<path d="M310.500 797v15M372 797v15M434 797v15M495.500 797v15M557 797v15M619 797v15M681 797v15M743 797v15" stroke="#888"/>
<g class="yr"><text x="257" y="810">003</text><text x="311" y="810">2004</text><text x="372" y="810">2005</text><text x="435" y="810">2006</text><text x="496" y="810">2007</text><text x="558" y="810">2008</text><text x="620" y="810">2009</text><text x="682" y="810">2010</text><text x="743" y="810">201</text></g>
<path d="M257 812.500H807.500V478" fill="none" stroke="#9a9a9a"/>
<path d="M260 815.500H809.500V480" fill="none" stroke="#888" stroke-width="4" filter="url(#soft2)"/>
<rect x="291" y="501" width="57" height="29" fill="#ffd24a" stroke="#ffb060" stroke-width="1"/><text x="294" y="524" font-size="23" textLength="51" lengthAdjust="spacingAndGlyphs" style="font-family:'Liberation Sans',sans-serif" font-weight="bold" fill="#fff">Guld</text>
<rect x="292" y="547" width="66" height="28" fill="#8a8a8a"/><text x="295" y="569" font-size="23" textLength="60" lengthAdjust="spacingAndGlyphs" style="font-family:'Liberation Sans',sans-serif" font-weight="bold" fill="#fff">Silver</text>
<rect x="294.500" y="598" width="85" height="28" fill="#a0301c" stroke="#801018"/><text x="298" y="620" font-size="23" textLength="78" lengthAdjust="spacingAndGlyphs" style="font-family:'Liberation Sans',sans-serif" font-weight="bold" fill="#fff">Koppar</text>
<rect x="296" y="653" width="79" height="29" fill="#0f7d78"/><text x="299" y="676" font-size="23" textLength="73" lengthAdjust="spacingAndGlyphs" style="font-family:'Liberation Sans',sans-serif" font-weight="bold" fill="#fff">Platina</text>
<text x="256" y="839" font-size="10.500" fill="#2a5a96" textLength="210" lengthAdjust="spacingAndGlyphs" style="font-family:'Liberation Sans',sans-serif" font-weight="bold">Guld, silver, koppar, platina • Månadsgraf •</text>
<text x="470" y="839" font-size="10.500" fill="#0f5fe8" text-decoration="underline" textLength="146" lengthAdjust="spacingAndGlyphs" style="font-family:'Liberation Sans',sans-serif" font-weight="bold">Charts courtesy of MetaStock</text>

<!-- sidebar -->
<rect x="995" y="92" width="180" height="796" fill="#e8edf5"/>
<rect x="995" y="92" width="15.500" height="796" fill="url(#vtrack)"/>
<rect x="1160" y="92" width="15" height="773" fill="url(#vtrack)"/>
<path d="M1010.500 92V888M1160.500 92V865" stroke="#b5b5b5"/>
<path d="M997 104Q997 96 1002.500 96Q1008 96 1008 104" fill="none" stroke="#aaa"/>
<path d="M1162 104Q1162 96 1167.500 96Q1173 96 1173 104" fill="none" stroke="#aaa"/>
<rect x="996.500" y="612" width="12.500" height="46" rx="6" fill="url(#vthumb)" stroke="#1a4fa0" stroke-width=".7"/>
<rect x="1161.500" y="497" width="12.500" height="332" rx="6" fill="url(#vthumb)" stroke="#1a4fa0" stroke-width=".7"/>
<path d="M996 856.500h14M996 872.500h14M1161 833.500h14M1161 849.500h14" stroke="#bbb"/>
<path d="M999 867l3.500-6 3.500 6zM999 875l3.500 6 3.500-6zM1164 844l3.500-6 3.500 6zM1164 852l3.500 6 3.500-6z" fill="#444"/>
<rect x="1161" y="859" width="14" height="6" fill="#e8e8e8"/>

<!-- thumbs -->
<g transform="translate(1046,33)"><use href="#thb"/><g filter="url(#soft2)"><g transform="translate(43,60)"><use href="#tl"/></g><path d="M2 72h38" stroke="#bbb"/><path d="M40 58v14" stroke="#bbb"/><rect x="7" y="87" width="42" height="3" fill="#c5d6a0"/><rect x="7" y="90" width="42" height="3" fill="#d8def0"/><path d="M8 66l2 1M15 68l2 0M22 65l2 0" stroke="#a33"/></g></g>
<text x="1085" y="157.500" text-anchor="middle" font-size="12.500">7</text>
<g transform="translate(1046,172)"><use href="#thb"/><g filter="url(#soft2)">
<g transform="translate(2,7)"><use href="#mini2"/></g><g transform="translate(45,9)"><use href="#tl"/></g><rect x="7" y="43" width="42" height="2.500" fill="#c5d6a0"/><rect x="7" y="45.500" width="42" height="2.500" fill="#d8def0"/>
<g transform="translate(2,50)"><use href="#mini2"/></g><g transform="translate(45,53)"><use href="#tl"/></g><rect x="7" y="83" width="42" height="2.500" fill="#c5d6a0"/><rect x="7" y="85.500" width="42" height="2.500" fill="#d8def0"/>
</g></g>
<text x="1085" y="296.500" text-anchor="middle" font-size="12.500">8</text>
<rect x="1044" y="309" width="82" height="113" fill="none" stroke="#3d74d6" stroke-width="2.500"/>
<g transform="translate(1046,311)"><use href="#thb"/><g filter="url(#soft2)">
<rect x="6" y="9" width="64" height="39" fill="#efeffb"/><path d="M6 9.500h64" stroke="#777"/>
<rect x="6" y="9.500" width="17" height="3" fill="#0c0c80"/><rect x="6" y="13" width="15" height="3" fill="#0a8a3c"/><rect x="6" y="17" width="10" height="3" fill="#222"/><rect x="6" y="21" width="9" height="3" fill="#8aa23e"/>
<g transform="translate(4.800,8.800) scale(.0455,.04)" stroke-width="1"><use href="#c1m"/></g>
<path d="M22 51.500h20" stroke="#cfe0f7" stroke-width="1.200"/>
<rect x="6" y="54" width="64" height="38" fill="#efeffb"/><path d="M6 54.500h64" stroke="#777"/>
<rect x="8" y="58" width="7" height="4" fill="#ffd28a"/><rect x="8" y="63" width="8" height="3.500" fill="#999"/><rect x="8" y="68" width="10" height="3.500" fill="#a0301c"/><rect x="8" y="74" width="10" height="3.500" fill="#0f7d78"/>
<g transform="translate(4.800,53.500) scale(.0455,.0335)" stroke-width="1"><use href="#c2m"/></g>
<path d="M24 96.500h20" stroke="#cfe0f7" stroke-width="1.200"/>
</g></g>
<rect x="1075" y="425" width="20" height="14" rx="7" fill="#c6c6c6"/>
<text x="1085" y="436" text-anchor="middle" font-size="12.500">9</text>
<g transform="translate(1046,450)"><use href="#thb"/><g filter="url(#soft2)">
<g transform="translate(1,7)"><use href="#mini"/></g><g transform="translate(39,7)"><use href="#mini2"/></g><g transform="translate(1,38) scale(1,.8)"><use href="#mini2"/></g><g transform="translate(39,38) scale(1,.8)"><use href="#mini"/></g><g transform="translate(1,66) scale(1,.85)"><use href="#mini"/></g><g transform="translate(39,66) scale(1,.85)"><use href="#mini2"/></g>
</g></g>
<text x="1085" y="574.500" text-anchor="middle" font-size="12.500">10</text>
<g transform="translate(1046,589)"><use href="#thb"/><g filter="url(#soft2)">
<g transform="translate(1,6)"><use href="#mini"/></g><g transform="translate(39,6)"><use href="#mini2"/></g><g transform="translate(1,38) scale(1,.8)"><use href="#mini2"/></g><g transform="translate(39,38) scale(1,.8)"><use href="#mini"/></g><g transform="translate(1,66) scale(1,.85)"><use href="#mini"/></g><g transform="translate(39,66) scale(1,.85)"><use href="#mini2"/></g>
</g></g>
<text x="1085" y="713.500" text-anchor="middle" font-size="12.500">11</text>
<g transform="translate(1046,728)"><use href="#thb"/>
<g fill="#dedede" filter="url(#soft2)"><rect x="6" y="11" width="16" height="1.500"/><rect x="6" y="14" width="20" height="4.500"/><rect x="6" y="18" width="28" height="2"/><rect x="6" y="21" width="34" height="1.500"/><rect x="6" y="24" width="28" height="4"/><rect x="6" y="29" width="28" height="3"/><rect x="6" y="35" width="22" height="2"/><rect x="6" y="38" width="26" height="2"/><rect x="6" y="41" width="28" height="2"/><rect x="6" y="44" width="22" height="1.500"/><rect x="6" y="47" width="29" height="2"/><rect x="6" y="50" width="27" height="2"/><rect x="6" y="53" width="6" height="1.500"/></g>
</g>
<text x="1085" y="852.500" text-anchor="middle" font-size="12.500">12</text>

<!-- sidebar toolbar -->
<rect x="1011" y="865" width="164" height="23" fill="#e6e6e6"/>
<rect x="1011" y="877" width="164" height="11" fill="#d8d8d8"/>
<path d="M1011 865.500H1175" stroke="#aaa"/>
<rect x="1058" y="865" width="33" height="23" fill="#a0a0a0" stroke="#8a8a8a"/>
<path d="M1016 870v12M1019 870v12M1022 870v12" stroke="#555"/>
<path d="M1038 873h3v3h-3zM1043 873h3v3h-3zM1048 873h3v3h-3zM1038 878h3v3h-3zM1043 878h3v3h-3zM1048 878h3v3h-3z" fill="#444"/>
<path d="M1072.500 873h3v3h-3zM1072.500 878h3v3h-3z" fill="#222"/>
<path d="M1103 873h1v1h-1zM1103 876.500h1v1h-1zM1103 880h1v1h-1z" fill="#444"/><path d="M1106 873.500h6M1106 877h6M1106 880.500h6" stroke="#555"/>
<path d="M1135 882l1-4 7-7 3 3-7 7z" fill="#555"/>
<path d="M1165 887l9-9M1168 887l6-6M1171 887l3-3" stroke="#888"/>
</g>

<!-- Title + toolbar -->
<path d="M67 92V29Q67 22 74 22H1168Q1175 22 1175 29V92Z" fill="url(#tbar)"/>
<path d="M67 92.500H1175" stroke="#666"/>
<rect x="67" y="92" width="1" height="796" fill="#777"/><rect x="1174.500" y="92" width="1" height="796" fill="#777"/>
<path d="M67 888.500H1175" stroke="#5c5c5c"/>
<circle cx="82" cy="33" r="6.500" fill="url(#rd)" stroke="#8a2020" stroke-width=".5"/>
<circle cx="103" cy="33" r="6.500" fill="url(#yl)" stroke="#8a6020" stroke-width=".5"/>
<circle cx="124" cy="33" r="6.500" fill="url(#gn)" stroke="#3c7020" stroke-width=".5"/>
<path d="M512 26h8l3 3v12h-11z" fill="#fff" stroke="#555"/><rect x="514" y="30" width="6" height="5" fill="#8899c0"/><path d="M514 37h7" stroke="#aaa"/>
<text x="529" y="37" font-size="13" fill="#111" textLength="202" lengthAdjust="spacingAndGlyphs">VM-update(2).pdf (sida 9 av 12)</text>
<rect x="1147.500" y="29" width="19" height="8" rx="4" fill="#ddd" stroke="#777"/>

<!-- toolbar pills -->
<g stroke="#9c9c9c">
<rect x="77.500" y="48.500" width="139" height="22" rx="11" fill="url(#pill)"/><path d="M146.500 49v21" stroke="#aaa"/>
<rect x="228.500" y="48.500" width="95" height="22" rx="11" fill="url(#pill)"/><path d="M275.500 49v21" stroke="#aaa"/>
<rect x="335.500" y="48.500" width="171" height="22" rx="11" fill="url(#pill)"/>
<rect x="392" y="49" width="56" height="21" fill="url(#pillsel)" stroke="none"/>
<rect x="519.500" y="48.500" width="45" height="22" rx="11" fill="url(#pill)"/>
<rect x="860.500" y="48.500" width="39" height="22" rx="11" fill="url(#pill)"/>
<rect x="910.500" y="49.500" width="255" height="22" rx="11" fill="#fff"/>
</g>
<path d="M113 50.500l7 7h-3.500v8q0 1.500-1.500 1.500h-5l-1-1v-8.500h-3.500z" fill="#f4f4f4" stroke="#777" stroke-width=".8"/>
<path d="M176 50h5l3 3v7h3.500l-7 7.500-7-7.500h3.500z" fill="#f4f4f4" stroke="#777" stroke-width=".8"/>
<rect x="246" y="57.500" width="14" height="4" fill="#f4f4f4" stroke="#777" stroke-width=".6"/>
<path d="M296.500 52.500h3.500v5.500h5.500v3.500h-5.500v5.500h-3.500v-5.500h-5.500v-3.500h5.500z" fill="#f4f4f4" stroke="#777" stroke-width=".6"/>
<path d="M359 60l-1-5q0-1 1-1l1.500 3 0-5q0-1 1.200-1l.8 5 .3-6q1-1 1.500 0l.4 6 1-5q1-1 1.500 0l-.3 6 1-3.500q1-.5 1.300.5l-1 6-1 4h-6z" fill="#f4f4f4" stroke="#777" stroke-width=".7"/>
<rect x="414.500" y="52.500" width="13" height="14" fill="#e8e8e8" stroke="#666"/>
<text x="421" y="64" font-size="10.500" font-weight="bold" text-anchor="middle" fill="#555">A</text>
<rect x="470.500" y="53.500" width="12" height="12" fill="#e2e2e2" stroke="#666" stroke-dasharray="2 2"/>
<path d="M532 66l2-5 12-7 2.500 3-12 7.500z" fill="#f4f4f4" stroke="#777" stroke-width=".8"/>
<rect x="871.500" y="52.500" width="17" height="12" fill="#f4f4f4" stroke="#666"/><path d="M883 53.500h5M883 55.500h5M883 57.500h5M883 59.500h5M883 61.500h5M883 63.500h5" stroke="#8fa0bb"/>
<circle cx="920.500" cy="59.500" r="3.800" fill="none" stroke="#444" stroke-width="1.800"/><path d="M923 62.500l3 3.500" stroke="#444" stroke-width="2.400"/>
<g class="tb"><text x="111" y="84" textLength="62" lengthAdjust="spacingAndGlyphs">Föregående</text><text x="182" y="84">Nästa</text><text x="275" y="84">Zooma</text><text x="363.500" y="84">Flytta</text><text x="421" y="84">Text</text><text x="477.500" y="84">Välj</text><text x="541.500" y="84" textLength="49" lengthAdjust="spacingAndGlyphs">Anteckna</text><text x="879" y="84">Sidofält</text><text x="1037" y="84">Sök</text></g>

<!-- menubar -->
<rect width="1440" height="22" fill="url(#menu)"/><rect width="1440" height="22" fill="url(#menuv)"/>
<rect y="22" width="1440" height="1" fill="#111"/>
<path d="M27 6.500C25.500 5 22 4.900 20.800 7.800 19.800 11 22 15.500 23.900 16.800 25 17.500 26 16.400 27.500 16.400 29 16.400 30 17.500 31 16.800 32.500 15.800 33.800 13.300 34.200 12.200 31.200 11 31 7.500 33.600 6.300 32.500 4.700 30 4.500 28.500 5.600 28 6 27.500 6.400 27 6.500ZM27 5C27 3 28.600 1.500 30.500 1.300 30.700 3.300 28.800 5 27 5Z" fill="#111"/>
<g class="m">
<text x="54" y="16" font-weight="bold" textLength="120" lengthAdjust="spacingAndGlyphs">Förhandsvisning</text>
<text x="193" y="16" textLength="35" lengthAdjust="spacingAndGlyphs">Arkiv</text>
<text x="246" y="16" textLength="60" lengthAdjust="spacingAndGlyphs">Redigera</text>
<text x="324" y="16" textLength="54" lengthAdjust="spacingAndGlyphs">Innehåll</text>
<text x="396" y="16" textLength="17" lengthAdjust="spacingAndGlyphs">Gå</text>
<text x="432" y="16" textLength="52" lengthAdjust="spacingAndGlyphs">Verktyg</text>
<text x="503" y="16" textLength="76" lengthAdjust="spacingAndGlyphs">Bokmärken</text>
<text x="598" y="16" textLength="51" lengthAdjust="spacingAndGlyphs">Fönster</text>
<text x="668" y="16" textLength="34" lengthAdjust="spacingAndGlyphs">Hjälp</text>
<text x="1314" y="16" textLength="74" lengthAdjust="spacingAndGlyphs">mån 20.26</text>
<text x="1267" y="15" textLength="35" lengthAdjust="spacingAndGlyphs" style="font-size:12px;fill:#333">(2.14)</text>
<text x="1101" y="16" style="font-size:14px">7</text>
</g>
<path d="M851 13l6-6" stroke="#666" stroke-width="2"/><path d="M856 4l5 3 2 4-3 0-5-4z" fill="#e8b020" stroke="#554" stroke-width=".8"/><circle cx="853" cy="7" r="2.500" fill="#ccc" stroke="#555"/><path d="M853 9l-1 9 2 1 1-8" fill="#aaa" stroke="#555" stroke-width=".6"/>
<path d="M879 8h3l4-4v14l-4-4h-3z" fill="#eee" stroke="#888"/><path d="M888 7q2 4 0 8M890.500 5q3 6 0 12" stroke="#888" fill="none"/>
<rect x="909" y="7" width="13" height="10" fill="#ddd" stroke="#444"/><path d="M912 3v8M918 3v8" stroke="#444"/><path d="M909 18h13" stroke="#444" stroke-width="1.500"/>
<rect x="942" y="5" width="9" height="14" rx="1.500" fill="#f0f0f0" stroke="#444"/><rect x="944" y="3.500" width="5" height="1.500" fill="#444"/>
<path d="M969.500 3v16" stroke="#555"/><path d="M970 4q5 0 7 2 3 1 5 1-1 3-5 3-3 0-7 1z" fill="#eee" stroke="#666" stroke-width=".8"/>
<path d="M1001 9h10l-5 5z" fill="#fff" stroke="#666" stroke-width=".8"/>
<rect x="1031" y="3" width="3" height="16" fill="#ee1c1c"/><rect x="1038" y="3" width="3" height="16" fill="#ee1c1c"/>
<path d="M1056 3h5q9 0 9 9 0 8-8 8-7 0-7-8z" fill="#f7c530" stroke="#b88a10" stroke-width=".8"/><path d="M1062 6v6l4 2" stroke="#7a5a10" fill="none"/>
<rect x="1081" y="4" width="16" height="15" fill="#222"/><path d="M1089 6l-4.500 11h2.500l2-5 2 5h2.500z" fill="#eee"/>
<path d="M1121.500 10q9.500-8 19 0M1124.500 13q6.500-5.500 13 0M1127.500 16q3.500-3 7 0" fill="none" stroke="#111" stroke-width="2"/><circle cx="1131" cy="18.500" r="1.600" fill="#111"/>
<circle cx="1161" cy="12" r="6.500" fill="none" stroke="#999" stroke-width="1.400"/><path d="M1161 7.500v5l3 2" fill="none" stroke="#999" stroke-width="1.200"/><path d="M1151 11l3 3 3-3" fill="none" stroke="#999"/>
<path d="M1187 8l6 7-3 3v-12l3 3-6 7" fill="none" stroke="#111" stroke-width="1.100"/>
<path d="M1212 9h3l4-4v14l-4-4h-3z" fill="#111"/><path d="M1222 8q2 4 0 8M1225 5.500q3.500 6.500 0 13" stroke="#111" fill="none" stroke-width="1.400"/>
<rect x="1242.500" y="6.500" width="18" height="11" fill="none" stroke="#111" stroke-width="1.400"/><rect x="1245" y="9" width="13" height="6" fill="#111"/><rect x="1261" y="10" width="2" height="4" fill="#111"/>
<circle cx="1410" cy="9" r="5" fill="none" stroke="#111" stroke-width="2"/><path d="M1414 13l5 5" stroke="#111" stroke-width="2.600"/>
</svg>
</body></html>
